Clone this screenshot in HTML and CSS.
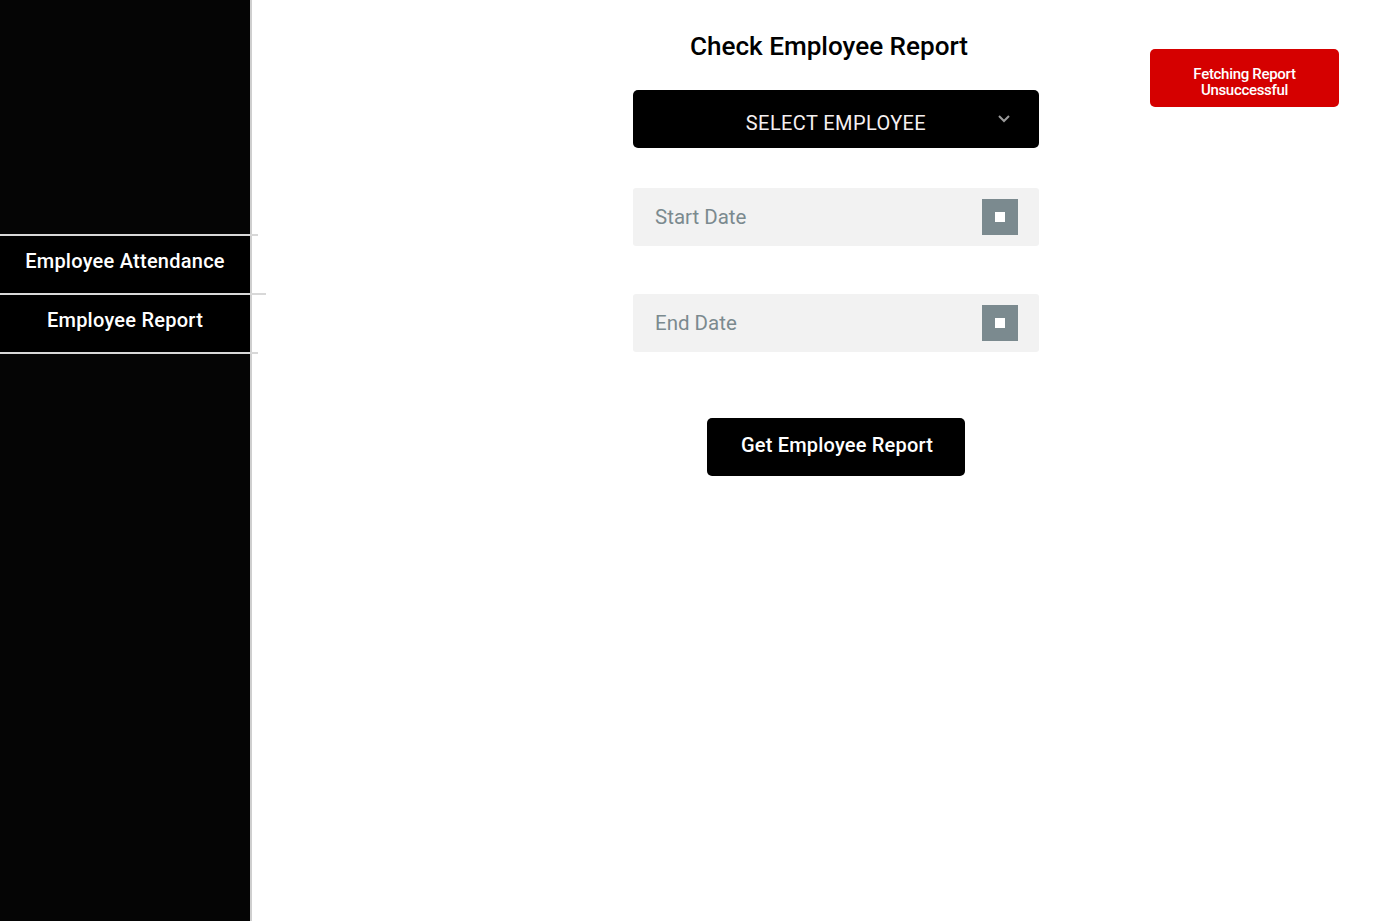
FILE: index.html
```html
<!DOCTYPE html>
<html>
<head>
<meta charset="utf-8">
<title>Employee Report</title>
<link rel="stylesheet" href="styles.css">
</head>
<body>
<div class="layout">
  <aside class="sidebar">
    <nav class="nav">
      <div class="nav-line"></div>
      <a class="nav-item">Employee Attendance</a>
      <div class="nav-line nav-line-long"></div>
      <a class="nav-item">Employee Report</a>
      <div class="nav-line"></div>
    </nav>
  </aside>
  <main class="main">
    <section class="form">
      <h1 class="title">Check Employee Report</h1>
      <div class="select">
        <span class="select-text">SELECT EMPLOYEE</span>
        <svg class="chevron" width="14" height="9" viewBox="0 0 14 9"><path d="M2 2 L7 7 L12 2" fill="none" stroke="#9a9a9a" stroke-width="2"/></svg>
      </div>
      <div class="date-field date-start">
        <span class="date-label">Start Date</span>
        <span class="date-icon"><span class="date-icon-inner"></span></span>
      </div>
      <div class="date-field date-end">
        <span class="date-label">End Date</span>
        <span class="date-icon"><span class="date-icon-inner"></span></span>
      </div>
      <button class="submit">Get Employee Report</button>
    </section>
  </main>
  <div class="toast">Fetching Report<br>Unsuccessful</div>
</div>
</body>
</html>
```
FILE: styles.css
```css
html, body {
  margin: 0;
  padding: 0;
  height: 100%;
  background: #ffffff;
  font-family: Roboto, "Liberation Sans", sans-serif;
}
.layout {
  display: flex;
  height: 921px;
  position: relative;
}
.sidebar {
  width: 250px;
  flex: 0 0 250px;
  background: #050505;
  border-right: 2px solid #cfcfcf;
}
.nav {
  padding-top: 234px;
  display: flex;
  flex-direction: column;
}
.nav-line {
  height: 2px;
  background: #d8d8d8;
  width: 258px;
}
.nav-line-long {
  width: 266px;
}
.nav-item {
  display: flex;
  align-items: center;
  justify-content: center;
  height: 57px;
  box-sizing: border-box;
  padding-bottom: 8px;
  background: #000;
  color: #fff;
  font-size: 20px;
  font-weight: 500;
  letter-spacing: 0.25px;
}
.main {
  flex: 1;
  display: flex;
  justify-content: flex-start;
}
.form {
  margin-left: 381px;
  width: 406px;
  display: flex;
  flex-direction: column;
  align-items: center;
}
.title {
  margin: 30px 0 0 -14px;
  font-size: 26.1px;
  font-weight: 500;
  color: #000;
  letter-spacing: 0;
  line-height: 32px;
}
.select {
  margin-top: 28px;
  width: 406px;
  height: 58px;
  background: #000;
  border-radius: 5px;
  position: relative;
  display: flex;
  align-items: center;
  justify-content: center;
  color: #f5f0f2;
  font-size: 20px;
  font-weight: 400;
  letter-spacing: 0.4px;
}
.select-text {
  padding-top: 8px;
}
.chevron {
  position: absolute;
  right: 28px;
  top: 24px;
}
.date-field {
  width: 406px;
  height: 58px;
  background: #f2f2f2;
  border-radius: 3px;
  display: flex;
  align-items: center;
  justify-content: space-between;
  box-sizing: border-box;
  padding: 0 21px 0 22px;
}
.date-start {
  margin-top: 40px;
}
.date-end {
  margin-top: 48px;
}
.date-label {
  font-size: 20.5px;
  color: #7b8a8f;
}
.date-icon {
  width: 36px;
  height: 36px;
  background: #7b8a8f;
  display: flex;
  align-items: center;
  justify-content: center;
}
.date-icon-inner {
  width: 10px;
  height: 10px;
  background: #fff;
}
.submit {
  margin-top: 66px;
  width: 258px;
  height: 58px;
  background: #000;
  color: #fff;
  border: none;
  border-radius: 5px;
  font-family: Roboto, "Liberation Sans", sans-serif;
  font-size: 20px;
  font-weight: 500;
  letter-spacing: 0.2px;
  padding: 0 0 4px 2px;
}
.toast {
  position: absolute;
  left: 1150px;
  top: 49px;
  width: 189px;
  height: 58px;
  box-sizing: border-box;
  padding-top: 8px;
  background: #d50000;
  border-radius: 5px;
  color: #fff;
  font-size: 15px;
  font-weight: 500;
  line-height: 16px;
  text-align: center;
  display: flex;
  align-items: center;
  justify-content: center;
  letter-spacing: -0.3px;
}
```
